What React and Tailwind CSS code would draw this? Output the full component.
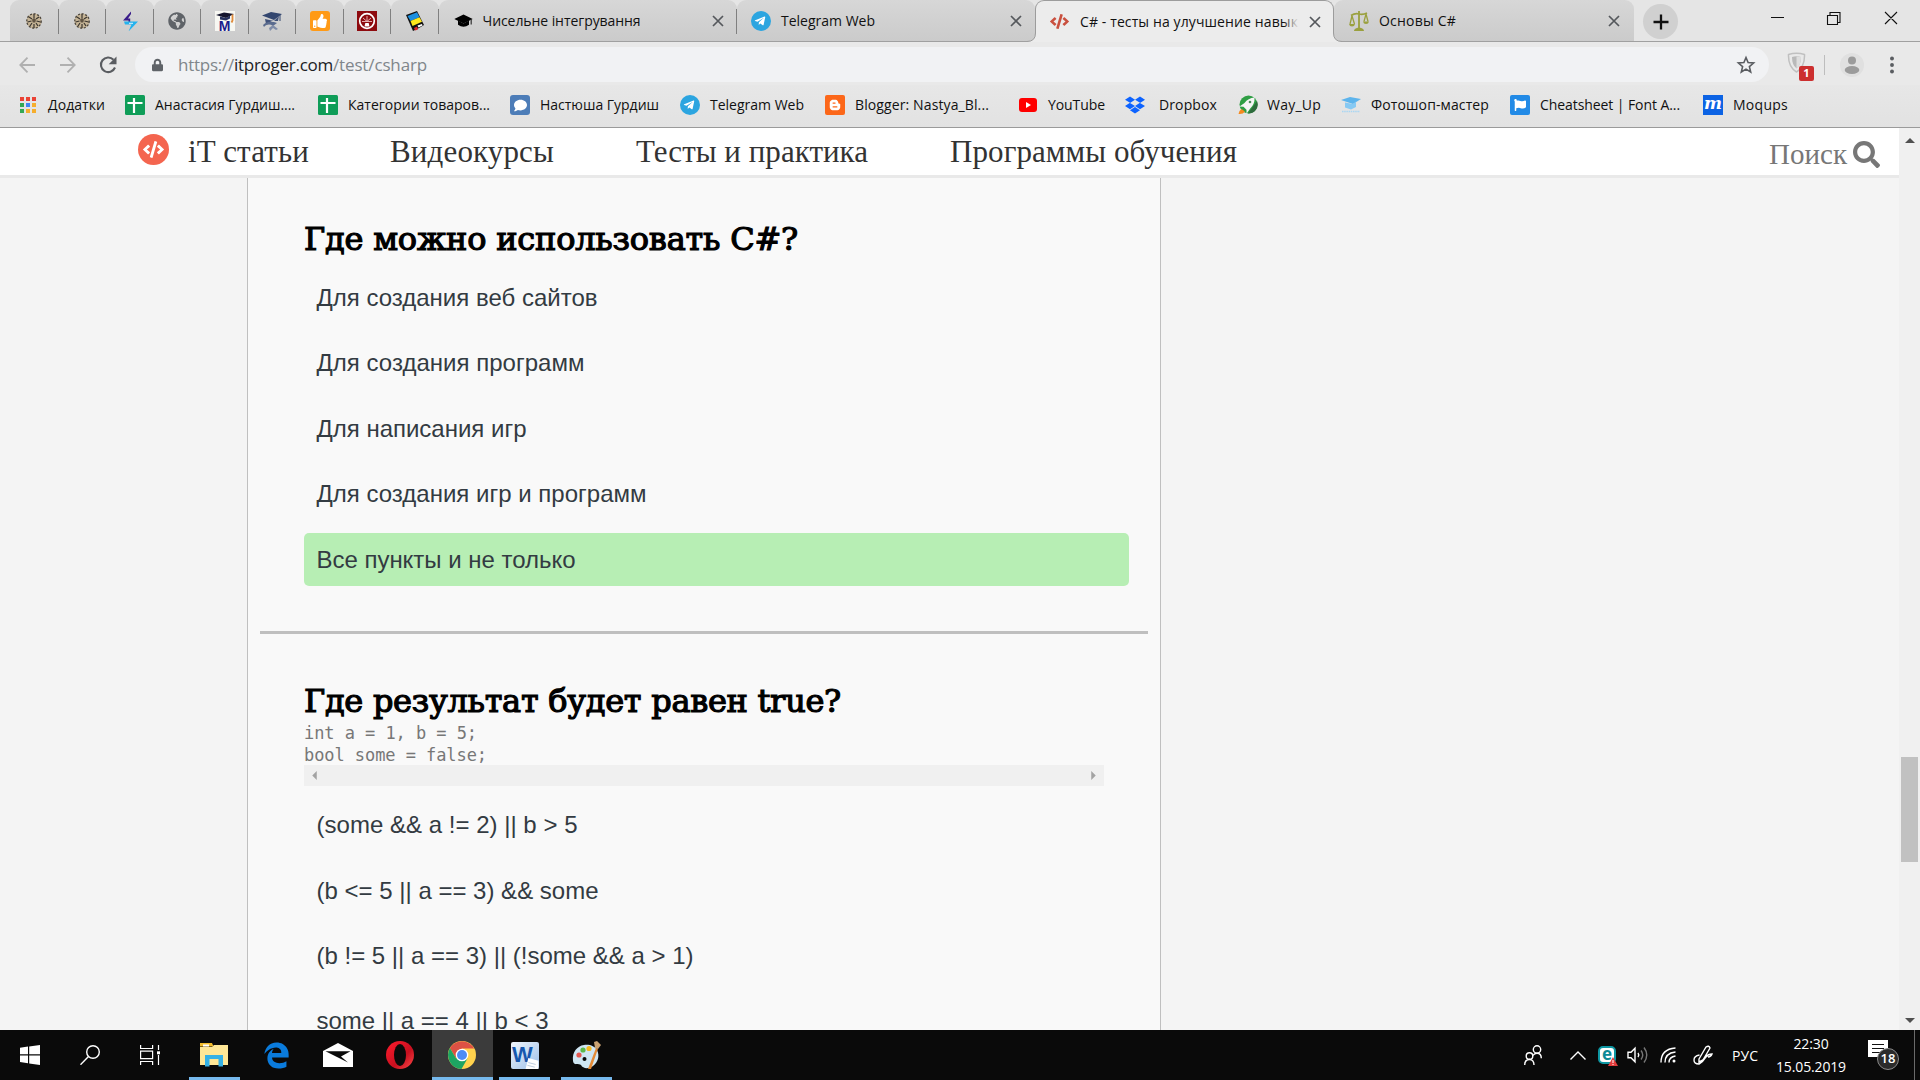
import React, { useLayoutEffect, useRef, useState } from "react";
import {
  FaTelegramPlane, FaGlobeAmericas, FaThumbsUp, FaCode,
  FaLock, FaBloggerB, FaDropbox, FaFlag, FaSearch, FaEdgeLegacy, FaComment,
} from "react-icons/fa";

/* Text that spreads its letters so that the line is exactly `w` pixels wide. */
function Line({ w, className = "", children }) {
  const ref = useRef(null);
  const [gap, setGap] = useState(0);
  useLayoutEffect(() => {
    const natural = ref.current.getBoundingClientRect().width;
    setGap((w - natural) / String(children).length);
  }, [w, children]);
  return (
    <span ref={ref} style={{ letterSpacing: gap + "px" }} className={"inline-block shrink-0 whitespace-pre " + className}>
      {children}
    </span>
  );
}

const Telegram = () => (
  <span className="flex h-5 w-5 items-center justify-center rounded-full bg-[#2ca5e0]">
    <FaTelegramPlane className="mr-[2px] h-3 w-3 text-white" />
  </span>
);

const Turtle = () => (
  <svg viewBox="0 0 20 20" className="h-5 w-5">
    <circle cx="10" cy="10" r="7.600" fill="#c5b496" />
    <circle cx="10" cy="10" r="7.200" fill="none" stroke="#4a443c" strokeWidth="1.300" strokeDasharray="2 1.700" />
    <path d="M5 6l3 2M15 6l-3 2M3.500 11l4-1M16.500 11l-4-1M6 15l2-3M14 15l-2-3M10 3v4M10 13v4" stroke="#3a352f" strokeWidth="1.200" fill="none" />
    <path d="M8 8.500l2-1.500 2 1.500-.7 3H8.700z" fill="#5f5343" />
  </svg>
);

const Bolt = () => (
  <svg viewBox="0 0 20 20" className="h-5 w-5">
    <path d="M11 .5L3 9.500h5.500v3.300h1.700V7.500H8L11 3z" fill="#3a1d8a" />
    <path d="M4 10.500h14L8.500 20.500l3-7H5z" fill="#23b2ee" />
    <path d="M9 12.300h4" stroke="#dff4fc" strokeWidth="1" />
  </svg>
);

const MCap = () => (
  <span className="relative block h-5 w-5 bg-[#f7f7f2]">
    <svg viewBox="0 0 20 20" className="h-5 w-5">
      <path d="M1 4l8-2.500 10 1.500-8 4z" fill="#14142c" />
      <path d="M5 5.500v3l6 1 4-2v-3l-4 2.500z" fill="#26305c" />
      <path d="M17.500 3.500v6l-1 2" stroke="#e08b3a" strokeWidth="1.800" fill="none" />
    </svg>
    <span className="absolute bottom-[-1px] left-[4px] font-['Liberation_Sans'] text-[14px] font-bold leading-[12px] text-[#1b1b8c]">M</span>
  </span>
);

const BlueCap = () => (
  <svg viewBox="0 0 20 20" className="h-5 w-5">
    <path d="M0 4.500L9 1l11 2-8 6z" fill="#33466f" />
    <path d="M3 8l1 5 6-3 6 0 1-5-5 5z" fill="#40527a" />
    <path d="M1 14c4-4 9-4 14-2l-4 3c-3-2-6-2-9 1z" fill="#5a6b8e" />
    <path d="M7 17l4-3 5 4-2 1-3-2-3 3z" fill="#7f8ca8" />
    <path d="M18 4v6" stroke="#33466f" />
  </svg>
);

const Like = () => (
  <span className="flex h-5 w-5 items-center justify-center rounded-[3px] bg-[#ff9a16]">
    <FaThumbsUp className="h-[14px] w-[14px] text-white" />
  </span>
);

const Gauge = () => (
  <svg viewBox="0 0 20 20" className="h-5 w-5">
    <rect width="20" height="20" fill="#8e0b0f" />
    <circle cx="10" cy="10" r="7.300" fill="none" stroke="#fff" strokeWidth="1.700" />
    <path d="M10 10.500V5M10 10.500L6 7M10 10.500L14 7M10 10.500H5M10 10.500h5" stroke="#f0bcbc" strokeWidth=".9" />
    <path d="M7.500 15.500h5l-.8-3.500H8.300z" fill="#fff" />
  </svg>
);

const Book = () => (
  <svg viewBox="0 0 20 20" className="h-5 w-5">
    <path d="M1 4L12 0l7 14-5 3-6 3z" fill="#111" />
    <path d="M2.500 5L12 1.300l2.500 5L5.500 10z" fill="#1a8fe0" />
    <path d="M5.500 10l9-3.700 2.500 4.500L7.500 15z" fill="#ffe81c" />
    <path d="M12.500 14.500l4.500-1.500.5 1.500-4 2z" fill="#fff" />
    <path d="M9 17l3-1.500 1 3-3 1z" fill="#e3242b" />
  </svg>
);

const Mortarboard = () => (
  <svg viewBox="0 0 19 14" className="h-[14px] w-[19px]">
    <path d="M.3 5L9.500.5 18.700 5 9.500 9.500z" fill="#000" />
    <path d="M4 6.500v4.300q5.500 4 11 0V6.500l-5.500 3z" fill="#000" />
    <path d="M17.200 5v5.500" stroke="#333" strokeWidth="1.200" />
  </svg>
);

const Scales = () => (
  <svg viewBox="0 0 20 20" className="h-5 w-5" fill="none" stroke="#9aa03e" strokeWidth="1.300">
    <path d="M10 0v17M2 4.500q4-2.500 8-1.500t8-1" strokeWidth="1.800" />
    <path d="M3 5L1 13M3 5l2.500 8M17 3l-2 7.500M17 3l2 7.500" />
    <path d="M0 13h6q-.5 2.500-3 2.500T0 13zM14 10.500h6q-.5 2.500-3 2.500t-3-2.500zM5 20q0-3 5-3.500 5 .5 5 3.500z" fill="#9aa03e" stroke="none" />
  </svg>
);

const CloseX = ({ className = "" }) => (
  <svg viewBox="0 0 12 12" className={"h-3 w-3 shrink-0 " + className}>
    <path d="M1 1l10 10M11 1L1 11" stroke="#55585c" strokeWidth="1.700" />
  </svg>
);

const smallTabs = [Turtle, Turtle, Bolt, () => <FaGlobeAmericas className="h-[18px] w-[18px] text-[#5f6368]" />, MCap, BlueCap, Like, Gauge, Book];
const tabBg = "bg-gradient-to-b from-[#d7d7d7] to-[#cbcbcb]";
const Sep = () => <span className="absolute right-0 top-[9px] h-[25px] w-px bg-[#808080]" />;

function TabStrip() {
  return (
    <div className="relative flex h-[42px] border-b border-[#a0a0a0] bg-[#e5e5e5] pl-[10px] font-['Open_Sans',sans-serif] text-[14px] leading-5 text-[#111]">
      {smallTabs.map((Icon, i) => (
        <div key={i} className={"relative flex h-[41px] items-center justify-center rounded-t-[9px] pt-px first:w-[48.500px] w-[47.500px] " + tabBg}>
          <Icon />
          <Sep />
        </div>
      ))}
      <div className={"relative flex h-[41px] w-[298.500px] items-center rounded-t-[9px] pl-[15px] pt-px " + tabBg}>
        <Mortarboard />
        <Line w={158} className="ml-[10px]">Чисельне інтегрування</Line>
        <CloseX className="ml-[71px]" />
        <Sep />
      </div>
      <div className={"flex h-[41px] w-[298px] items-center rounded-t-[9px] pl-[14px] pt-px " + tabBg}>
        <Telegram />
        <Line w={94} className="ml-[10px]">Telegram Web</Line>
        <CloseX className="ml-[135px]" />
      </div>
      <div className="relative z-10 flex h-[42px] w-[299px] items-center rounded-t-[9px] border-x border-t border-[#9c9c9c] bg-[#ececec] pl-[14px]">
        <svg viewBox="0 0 9 9" className="absolute -left-[9px] bottom-0 h-[9px] w-[9px]"><path d="M9 0v9H0v-.5Q8.500 8.500 8.500 0z" fill="#ececec" /><path d="M0 8.500Q8.500 8.500 8.500 0" fill="none" stroke="#9c9c9c" /></svg>
        <svg viewBox="0 0 9 9" className="absolute -right-[9px] bottom-0 h-[9px] w-[9px]"><path d="M0 0v9h9v-.5Q.5 8.500.5 0z" fill="#ececec" /><path d="M9 8.500Q.5 8.500.5 0" fill="none" stroke="#9c9c9c" /></svg>
        <FaCode className="h-[19px] w-[19px] text-[#c9503f]" />
        <div className="relative ml-[11px] w-[219px] overflow-hidden">
          <Line w={218}>C# - тесты на улучшение навык</Line>
          <span className="absolute inset-y-0 right-0 w-4 bg-gradient-to-r from-transparent to-[#ececec]" />
        </div>
        <CloseX className="ml-[10px]" />
      </div>
      <div className={"flex h-[41px] w-[300px] items-center rounded-t-[9px] pl-[15px] pt-px " + tabBg}>
        <Scales />
        <Line w={77} className="ml-[10px]">Основы C#</Line>
        <CloseX className="ml-[152px]" />
      </div>
      <div className="ml-[9px] mt-1 flex h-[35px] w-[35px] items-center justify-center rounded-full bg-[#d0d0d0]">
        <svg viewBox="0 0 16 16" className="h-4 w-4"><path d="M8 .5v15M.5 8h15" stroke="#111" strokeWidth="2.300" /></svg>
      </div>
      <svg viewBox="0 0 130 20" className="ml-[93px] mt-2 h-5 w-[130px]" fill="none" stroke="#111" strokeWidth="1.100">
        <path d="M0 9.500h13M56.500 7.500h10v9h-10zM59 7V4.500h10v10h-2M114 4l12 12M126 4l-12 12" />
      </svg>
    </div>
  );
}

function Toolbar() {
  return (
    <div className="flex h-[43px] items-center bg-[#e9e9e9] font-['Open_Sans',sans-serif]">
      <svg viewBox="0 0 120 24" className="ml-[10px] mt-[3px] h-6 w-[120px] shrink-0" fill="none" strokeWidth="1.800">
        <path d="M25 12H10.500M17.500 4.700L10.300 12l7.200 7.300" stroke="#b0b0b0" />
        <path d="M50 12h14.500M57.500 4.700l7.200 7.300-7.200 7.300" stroke="#b0b0b0" />
        <path d="M103.500 6.700a7.300 7.300 0 1 0 1.500 7.800" stroke="#5a5d61" strokeWidth="2.100" />
        <path d="M106.500 3.500v7.800h-7.800z" fill="#5a5d61" />
      </svg>
      <div className="ml-[5px] mt-[2px] flex h-[35px] w-[1634px] items-center rounded-full bg-[#f1f2f4] pl-[17px]">
        <FaLock className="h-[14px] w-[11px] text-[#5f6368]" />
        <div className="ml-[15px] flex text-[17px] leading-6 text-[#80868b]">
          <Line w={56}>https://</Line>
          <Line w={99} className="text-[#202124]">itproger.com</Line>
          <Line w={94}>/test/csharp</Line>
        </div>
        <svg viewBox="0 0 20 20" className="ml-auto mr-[13px] h-5 w-5" fill="none" stroke="#5a5d61" strokeWidth="1.600">
          <path d="M10 2.500l2.100 5.100 5.500.4-4.200 3.600 1.300 5.400L10 14.100 5.300 17l1.300-5.400L2.400 8l5.500-.4z" />
        </svg>
      </div>
      <div className="relative ml-[18px] mt-[5px] h-7 w-[28px] shrink-0">
        <svg viewBox="0 0 20 22" className="h-[22px] w-5" fill="none">
          <path d="M1.500 2.500Q9.500 0 17.500 2.500 18 15 9.500 20 1 15 1.500 2.500z" stroke="#c0c0c0" strokeWidth="1.500" />
          <path d="M5 5q4.500-1.500 9 0 0 8-4.500 11.500Q5 13 5 5z" fill="#b9b9b9" /><path d="M9.500 4.500q2.500 0 4.500.5 0 8-4.500 11.500z" fill="#dedede" />
        </svg>
        <span className="absolute left-[12px] top-[14px] flex h-[15px] w-[15px] items-center justify-center rounded-[2px] bg-[#cc2f2f] font-['Open_Sans'] text-[11px] font-bold text-white">1</span>
      </div>
      <span className="ml-[9px] mt-[3px] h-5 w-px bg-[#bdbdbd]" />
      <svg viewBox="0 0 24 24" className="ml-[15px] mt-[2px] h-6 w-6">
        <circle cx="12" cy="12" r="12" fill="#e0e0e0" /><circle cx="12" cy="7.500" r="4" fill="#9b9b9b" />
        <ellipse cx="12" cy="17" rx="7.300" ry="4" fill="#9b9b9b" />
      </svg>
      <svg viewBox="0 0 4 18" className="ml-[26px] mt-[2px] h-[18px] w-1" fill="#5a5d61">
        <circle cx="2" cy="2.500" r="1.950" /><circle cx="2" cy="9" r="1.950" /><circle cx="2" cy="15.500" r="1.950" />
      </svg>
    </div>
  );
}

const appColors = ["bg-[#ea4335]", "bg-[#ea4335]", "bg-[#ea4335]", "bg-[#34a853]", "bg-[#4285f4]", "bg-[#f6ae2d]", "bg-[#34a853]", "bg-[#f6ae2d]", "bg-[#f6ae2d]"];
const Apps = () => (
  <span className="grid grid-cols-3 gap-[2px]">
    {appColors.map((c, i) => <span key={i} className={"h-[4px] w-[4px] " + c} />)}
  </span>
);
const Sheet = () => (
  <svg viewBox="0 0 20 20" className="h-5 w-5"><rect width="20" height="20" rx="1.500" fill="#0f9d58" /><path d="M9 3v15M2.500 8h15" stroke="#fff" strokeWidth="2.200" /></svg>
);
const Chat = () => <span className="flex h-5 w-5 items-center justify-center rounded-[3px] bg-[#4d7db8]"><FaComment className="h-[13px] w-[13px] text-white" /></span>;
const Blogger = () => <span className="flex h-5 w-5 items-center justify-center rounded-[2px] bg-[#fc6719]"><FaBloggerB className="h-3 w-3 text-white" /></span>;
const YouTube = () => (
  <svg viewBox="0 0 18 14" className="h-[14px] w-[18px]"><rect width="18" height="14" rx="3" fill="#f00" /><path d="M7 4l5 3-5 3z" fill="#fff" /></svg>
);
const Rocket = () => (
  <svg viewBox="0 0 20 20" className="h-5 w-5">
    <circle cx="10.500" cy="9.500" r="9" fill="#2f9e44" /><path d="M19 6a9 9 0 0 1-9 12.500z" fill="#2d6b3c" />
    <path d="M16.500 2.500Q10 3 6.500 8L1.500 11.500l4 .3 3 3 0 4 3.500-5Q17 9 16.500 2.500z" fill="#f5f5f5" />
    <circle cx="12" cy="7" r="1.300" fill="#4b8a58" /><path d="M3.500 14l3.500 2.500q-2 3-6.500 2.500 .5-3.500 3-5z" fill="#f58a1f" />
  </svg>
);
const LightCap = () => (
  <svg viewBox="0 0 20 20" className="h-5 w-5">
    <path d="M0 5l9-3 11 2-8 5z" fill="#5db4ec" /><path d="M4 7.500v5l6 2 5-2.500V6.500L12 9z" fill="#86c9f3" />
    <path d="M1 16.500h18" stroke="#a9d6f3" strokeWidth="1.500" strokeDasharray="1.500 .7" />
  </svg>
);
const Cheat = () => <span className="flex h-5 w-5 items-center justify-center rounded-[2px] bg-[#228ae6]"><FaFlag className="h-3 w-3 text-white" /></span>;
const Moqups = () => <span className="flex h-5 w-5 items-center justify-center bg-[#0c63e4] pb-[4px] font-['DejaVu_Serif'] text-[17px] font-bold italic leading-none text-white">m</span>;

const bookmarks = [
  { Icon: Apps, slot: "w-[105px]", ico: "w-[16px]", gap: "ml-[12px]", w: 57, t: "Додатки" },
  { Icon: Sheet, slot: "w-[193px]", ico: "w-5", gap: "ml-[10px]", w: 140, t: "Анастасия Гурдиш...." },
  { Icon: Sheet, slot: "w-[192px]", ico: "w-5", gap: "ml-[10px]", w: 142, t: "Категории товаров..." },
  { Icon: Chat, slot: "w-[170px]", ico: "w-5", gap: "ml-[10px]", w: 119, t: "Настюша Гурдиш" },
  { Icon: Telegram, slot: "w-[145px]", ico: "w-5", gap: "ml-[10px]", w: 94, t: "Telegram Web" },
  { Icon: Blogger, slot: "w-[194px]", ico: "w-5", gap: "ml-[10px]", w: 134, t: "Blogger: Nastya_Bl..." },
  { Icon: YouTube, slot: "w-[106px]", ico: "w-[18px]", gap: "ml-[11px]", w: 57, t: "YouTube" },
  { Icon: () => <FaDropbox className="h-5 w-5 text-[#0d63ff]" />, slot: "w-[113px]", ico: "w-5", gap: "ml-[14px]", w: 58, t: "Dropbox" },
  { Icon: Rocket, slot: "w-[103px]", ico: "w-5", gap: "ml-[9px]", w: 54, t: "Way_Up" },
  { Icon: LightCap, slot: "w-[169px]", ico: "w-5", gap: "ml-[10px]", w: 118, t: "Фотошоп-мастер" },
  { Icon: Cheat, slot: "w-[193px]", ico: "w-5", gap: "ml-[10px]", w: 140, t: "Cheatsheet | Font A..." },
  { Icon: Moqups, slot: "w-[100px]", ico: "w-5", gap: "ml-[10px]", w: 55, t: "Moqups" },
];

function Bookmarks() {
  return (
    <div className="flex h-[43px] items-center border-b border-[#9a9a9a] bg-gradient-to-b from-[#e7e7e7] to-[#e2e2e2] pb-[2px] pl-5 font-['Open_Sans',sans-serif] text-[14px] leading-5 text-[#111]">
      {bookmarks.map(({ Icon, slot, ico, gap, w, t }) => (
        <div key={t} className={"flex shrink-0 items-center " + slot}>
          <span className={"flex shrink-0 justify-center " + ico}><Icon /></span>
          <Line w={w} className={gap}>{t}</Line>
        </div>
      ))}
    </div>
  );
}

function Answer({ w, right, children }) {
  return (
    <div className={"mb-[12.450px] flex h-[53px] w-[825px] shrink-0 items-center rounded-[5px] pl-[12.500px] " + (right ? "bg-[#b7eeb4]" : "")}>
      <Line w={w}>{children}</Line>
    </div>
  );
}

const heading = "font-['DejaVu_Serif',serif] text-[32px] leading-[44px] text-black [-webkit-text-stroke:1.200px_black]";

function Page() {
  return (
    <div className="flex h-[902px] bg-[#f4f4f4]">
      <div className="flex w-[1899px] flex-col overflow-hidden">
        <header className="flex h-[50px] shrink-0 items-center border-b-[3px] border-[#e9e9e9] bg-white pl-[138px] font-['Liberation_Serif',serif] text-[31px] leading-9 text-[#333]">
          <span className="mb-[5px] flex h-[31px] w-[31px] items-center justify-center rounded-full bg-[#f4654f]"><FaCode className="h-[21px] w-[21px] text-white" /></span>
          <Line w={121} className="ml-[19px]">iT статьи</Line>
          <Line w={164} className="ml-[81px]">Видеокурсы</Line>
          <Line w={232} className="ml-[82px]">Тесты и практика</Line>
          <Line w={287} className="ml-[82px]">Программы обучения</Line>
          <Line w={78} className="ml-auto mt-[4px] text-[29px] text-[#777]">Поиск</Line>
          <FaSearch className="ml-[6px] mr-[19px] mt-[6px] h-[27px] w-[27px] text-[#777]" />
        </header>
        <main className="ml-[247px] flex h-[852px] w-[914px] flex-col border-x border-[#bfbfbf] bg-[#f9f9f9] font-['Liberation_Sans',sans-serif] text-[24px] leading-7 text-[#333b42]">
          <section className="flex flex-col pl-14 pt-[39px]">
            <h2 className={heading}><Line w={494}>Где можно использовать C#?</Line></h2>
            <div className="mt-[10.500px] flex flex-col">
              <Answer w={281}>Для создания веб сайтов</Answer>
              <Answer w={268}>Для создания программ</Answer>
              <Answer w={210}>Для написания игр</Answer>
              <Answer w={330}>Для создания игр и программ</Answer>
              <Answer w={259} right>Все пункты и не только</Answer>
            </div>
          </section>
          <div className="mx-3 mt-[32.700px] h-[3px] shrink-0 bg-[#bfbfbf]" />
          <section className="flex flex-col pl-14 pt-[45px]">
            <h2 className={heading}><Line w={537}>Где результат будет равен true?</Line></h2>
            <div className="-mt-px mb-[-1px] flex flex-col font-['DejaVu_Sans_Mono',monospace] text-[17px] leading-[22px] text-[#777]">
              <Line w={173} className="self-start">int a = 1, b = 5;</Line>
              <Line w={183} className="self-start">bool some = false;</Line>
            </div>
            <div className="flex h-[21px] w-[800px] items-center justify-between bg-[#f0f0f0] px-[8px]">
              <svg viewBox="0 0 5 10" className="h-[9px] w-[5px]"><path d="M5 0v10L0 5z" fill="#a3a3a3" /></svg>
              <svg viewBox="0 0 5 10" className="h-[9px] w-[5px]"><path d="M0 0v10l5-5z" fill="#a3a3a3" /></svg>
            </div>
            <div className="mt-[12.300px] flex flex-col">
              <Answer w={261}>{"(some && a != 2) || b > 5"}</Answer>
              <Answer w={282}>{"(b <= 5 || a == 3) && some"}</Answer>
              <Answer w={377}>{"(b != 5 || a == 3) || (!some && a > 1)"}</Answer>
              <Answer w={232}>{"some || a == 4 || b < 3"}</Answer>
            </div>
          </section>
        </main>
      </div>
      <div className="flex w-[21px] flex-col items-center bg-[#f0f0f0]">
        <svg viewBox="0 0 10 5" className="mt-[10px] h-[5px] w-[10px]"><path d="M0 5h10L5 0z" fill="#505050" /></svg>
        <div className="mt-[614px] h-[105px] w-[17px] bg-[#c1c1c1]" />
        <svg viewBox="0 0 10 5" className="mt-[156px] h-[5px] w-[10px]"><path d="M0 0h10L5 5z" fill="#505050" /></svg>
      </div>
    </div>
  );
}

const taskIcons = [
  { w: "w-[60px]", pic: (
    <svg viewBox="0 0 20 20" className="h-5 w-5" fill="#fff"><path d="M0 2.700l8-1.100v7.700H0zM9.200 1.400L20 0v9.300H9.200zM0 10.500h8v7.700l-8-1.100zM9.200 10.500H20V20L9.200 18.500z" /></svg>) },
  { w: "w-[60px]", pic: (
    <svg viewBox="0 0 20 20" className="h-5 w-5" fill="none" stroke="#fff" strokeWidth="1.400"><circle cx="13" cy="7" r="6.300" /><path d="M8.500 11.500L.5 19.700" /></svg>) },
  { w: "w-[60px]", pic: (
    <svg viewBox="0 0 20 20" className="h-5 w-5" fill="none" stroke="#fff" strokeWidth="1.200"><path d="M.6 0v3.500h12V0M.6 6.200h12v7.500H.6zM.6 20v-3.500h12V20M18.500 0v5M18.500 10v10" /><path d="M17 6.300h3v3h-3z" fill="#fff" stroke="none" /></svg>) },
  { w: "w-[68px]", bar: "w-[51px]", pic: (
    <svg viewBox="0 0 28 24" className="h-6 w-7"><path d="M0 0h12l1.500 3.500H0z" fill="#f3bc2b" /><path d="M3 1.500h6v2H3z" fill="#fff" /><path d="M0 4h12L14 2h14v20H0z" fill="#ffe796" /><path d="M5 23.500V12h18v11.500h-4.500V16h-9v7.500z" fill="#35b1e6" /></svg>) },
  { w: "w-[56px]", pic: <FaEdgeLegacy className="h-[27px] w-[27px] text-[#0a7bdc]" /> },
  { w: "w-[68px]", pic: (
    <svg viewBox="0 0 30 24" className="h-6 w-[30px]"><path d="M0 8L15 0l15 8v16H0z" fill="#fff" /><path d="M2.500 8.300h25L18 13.500l7 6z" fill="#0a0a0a" /></svg>) },
  { w: "w-[56px]", pic: (
    <svg viewBox="0 0 28 28" className="h-7 w-7"><defs><linearGradient id="op" x1="0" x2="1" y1="0" y2="1"><stop offset="0" stopColor="#ff1b2d" /><stop offset=".6" stopColor="#c8101f" /><stop offset="1" stopColor="#ff4a4a" /></linearGradient></defs><ellipse cx="14" cy="14" rx="14" ry="14" fill="url(#op)" /><ellipse cx="14" cy="14" rx="6" ry="11" fill="#0a0a0a" /></svg>) },
  { w: "w-[68px]", active: true, bar: "w-[61px]", pic: (
    <svg viewBox="0 0 28 28" className="h-7 w-7"><circle cx="14" cy="14" r="14" fill="#ffd24d" /><path d="M1.900 7A14 14 0 0 1 26.100 7.500H14L8 17.200z" fill="#dd5144" /><path d="M1.900 7A14 14 0 0 0 13.500 28l6-10.500L14 19 8 17.200z" fill="#1da462" /><circle cx="14" cy="14" r="6.300" fill="#fff" /><circle cx="14" cy="14" r="5" fill="#4c8bf5" /></svg>) },
  { w: "w-[57px]", bar: "w-[51px]", pic: (
    <span className="relative flex h-[27px] w-[28px] items-start justify-center rounded-[2px] bg-gradient-to-br from-[#f2f7fd] to-[#9cbfe8] font-['Liberation_Sans'] text-[22px] font-bold leading-[25px] text-[#1657ae]"><span className="mr-1">W</span><svg viewBox="0 0 14 12" className="absolute bottom-0 right-0 h-[11px] w-[14px]"><path d="M3 0l11 3v9H0z" fill="#fff" /><path d="M3 5l8 2M2 8l8 2" stroke="#b7c7da" /></svg></span>) },
  { w: "w-[67px]", bar: "w-[51px]", pic: (
    <svg viewBox="0 0 30 29" className="h-[29px] w-[30px]"><path d="M12 4C5 5 0 11 1 20c.5 5 6 2 8 4 2 4 8 4 12 1 5-4 7-10 4-16-2-4-8-6-13-5z" fill="#cfe6f3" /><circle cx="7" cy="14" r="2.600" fill="#e4574f" /><circle cx="11" cy="9" r="2.600" fill="#5cb84a" /><circle cx="17" cy="7.500" r="2.600" fill="#f5b81f" /><circle cx="12.500" cy="18" r="2" fill="#0a0a0a" /><path d="M16 28L24 7l2 .7L19 28z" fill="#e48a36" /><path d="M22 1l3-1 4 4-3 4-3-1z" fill="#c9a272" /></svg>) },
];

const stroke = { fill: "none", stroke: "#fff", strokeWidth: 1.4 };

function Taskbar() {
  return (
    <div className="flex h-[50px] bg-[#0a0a0a] font-['Open_Sans',sans-serif] text-white">
      {taskIcons.map(({ w, bar, active, pic }, i) => (
        <div key={i} className={"flex h-[50px] shrink-0 justify-center " + w}>
          <div className={"relative flex h-[50px] w-[61px] shrink-0 items-center justify-center " + (active ? "bg-[#3b3b3b]" : "")}>
            {pic}
            {bar && <span className={"absolute bottom-0 h-[3px] bg-[#76b9ed] " + bar} />}
          </div>
        </div>
      ))}
      <div className="ml-auto flex shrink-0 items-center">
        <svg viewBox="0 0 18 20" className="h-5 w-[18px]" {...stroke}><circle cx="13" cy="4.500" r="3.700" /><circle cx="5.500" cy="11" r="3.300" /><path d="M.7 20c0-3.500 2-5.500 4.800-5.500s4.500 2 4.500 5.500M9 10.500c1-1.800 2.500-2.300 4-2.300 2.800 0 4.300 2 4.300 5" /></svg>
        <svg viewBox="0 0 16 9" className="ml-[28px] h-[9px] w-4" {...stroke}><path d="M.5 8.500L8 1l7.500 7.500" /></svg>
        <span className="relative ml-[12px] flex h-[18px] w-[18px] items-center justify-center rounded-[5px] border-2 border-[#0e97a3] bg-white text-[17px] font-bold leading-none text-[#0e8a96]"><span className="mb-1">e</span>
          <svg viewBox="0 0 10 9" className="absolute -bottom-[4px] -right-[4px] h-[9px] w-[10px]"><path d="M5 0l5 9H0z" fill="#e23c3c" /><path d="M5 3v3M5 7v1" stroke="#fff" /></svg>
        </span>
        <svg viewBox="0 0 21 18" className="ml-[11px] h-[18px] w-[21px]" {...stroke}><path d="M1 6.200h3l4-4v13.600l-4-4H1zM11 7q1.500 2 0 4" /><path d="M14 4.500q3.500 4.500 0 9M17 1.500q5.500 7.500 0 15" stroke="#777" /></svg>
        <svg viewBox="0 0 16 16" className="ml-[12px] h-4 w-4" {...stroke}><path d="M1 15.500Q1 2 15.500 1M5 15.500Q5 6 15.500 5M9 15.500Q9 10 15.500 9" /><circle cx="14" cy="14" r="1.500" fill="#fff" stroke="none" /></svg>
        <svg viewBox="0 0 20 20" className="ml-[17px] h-5 w-5" {...stroke}><path d="M6 14L13 2q3-2 4 1L10 15l-4 2zM6.500 10Q1 11 1 15t5 4q4-2 7-7 2-3 6-3-1 3-4 3" /></svg>
        <Line w={26} className="ml-[19px] text-[14px]">РУС</Line>
        <div className="ml-[18px] flex w-[70px] flex-col items-center text-[14px] leading-[23px]">
          <Line w={35}>22:30</Line>
          <Line w={70}>15.05.2019</Line>
        </div>
        <div className="relative ml-[22px] mr-[15px] h-[30px] w-[31px]">
          <svg viewBox="0 0 20 20" className="h-5 w-5"><path d="M0 0h20v17H0z" fill="#fff" /><path d="M4 4.500h12M4 8.500h12M4 12.500h8" stroke="#111" strokeWidth="1.200" /></svg>
          <span className="absolute bottom-0 right-0 flex h-[22px] w-[22px] items-center justify-center rounded-full border border-[#8a8a8a] bg-[#2b2b2b] text-[13px] font-semibold">18</span>
        </div>
        <span className="mr-[5px] h-[50px] w-px bg-[#6a6a6a]" />
      </div>
    </div>
  );
}

export default function App() {
  return (
    <div className="flex h-[1080px] w-[1920px] flex-col overflow-hidden">
      <TabStrip />
      <Toolbar />
      <Bookmarks />
      <Page />
      <Taskbar />
    </div>
  );
}
